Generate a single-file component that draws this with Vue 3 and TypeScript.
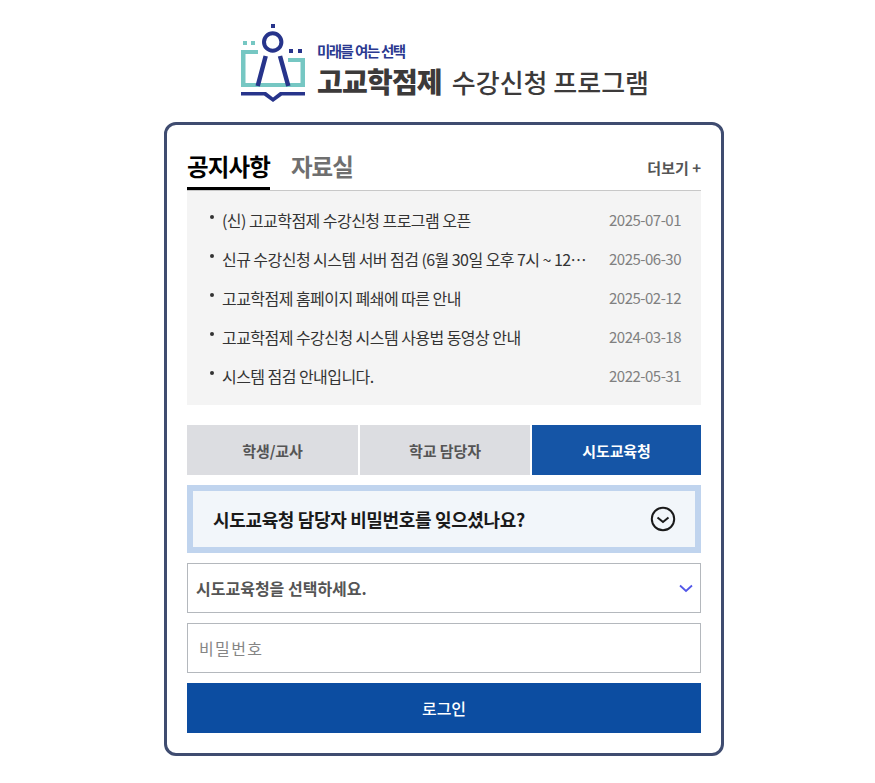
<script setup lang="ts">
interface Notice { title: string; date: string }
const notices: Notice[] = [
  { title: '(신) 고교학점제 수강신청 프로그램 오픈', date: '2025-07-01' },
  { title: '신규 수강신청 시스템 서버 점검 (6월 30일 오후 7시 ~ 12시 예정)', date: '2025-06-30' },
  { title: '고교학점제 홈페이지 폐쇄에 따른 안내', date: '2025-02-12' },
  { title: '고교학점제 수강신청 시스템 사용법 동영상 안내', date: '2024-03-18' },
  { title: '시스템 점검 안내입니다.', date: '2022-05-31' },
]
const roles = ['학생/교사', '학교 담당자', '시도교육청']
</script>

<template>
  <div class="page">
    <header class="logo">
      <svg class="mark" width="66" height="82" viewBox="0 0 66 82" fill="none">
        <g fill="#76c7c3">
          <rect x="3" y="19" width="4" height="4" />
          <rect x="11" y="19" width="4" height="4" />
          <path d="M1 28h17v4H5.500v29h55V40H48v-4h17v29H1z" />
        </g>
        <g fill="#27348b">
          <rect x="31" y="2" width="4" height="4" />
          <rect x="49" y="27" width="4" height="4" />
          <rect x="58" y="27" width="4" height="4" />
          <path d="M1 70h25l7 5.500 7-5.500h25v3.500H42l-9 6.500-9-6.500H1z" />
        </g>
        <circle cx="32.700" cy="20" r="8.700" stroke="#27348b" stroke-width="4" />
        <path d="M25.700 34 17.700 64M40 34l8.300 30" stroke="#27348b" stroke-width="4.500" />
      </svg>
      <div class="logo-text">
        <div class="slogan">미래를 여는 선택</div>
        <div class="brand"><b>고교학점제</b><span>수강신청 프로그램</span></div>
      </div>
    </header>

    <main class="card">
      <div class="tabs">
        <div class="tab active">공지사항</div>
        <div class="tab">자료실</div>
        <div class="more">더보기 +</div>
      </div>

      <ul class="notices">
        <li v-for="n in notices" :key="n.date" class="notice">
          <span class="bullet"></span>
          <span class="title">{{ n.title }}</span>
          <span class="date">{{ n.date }}</span>
        </li>
      </ul>

      <div class="roles">
        <button v-for="(r, i) in roles" :key="r" class="role" :class="{ on: i === 2 }">{{ r }}</button>
      </div>

      <div class="forgot">
        <span>시도교육청 담당자 비밀번호를 잊으셨나요?</span>
        <svg width="26" height="26" viewBox="0 0 26 26" fill="none" stroke="#1a1a1a">
          <circle cx="13" cy="13" r="11.2" stroke-width="2" />
          <path d="M7.500 11.500 13 16l5.500-4.500" stroke-width="2" />
        </svg>
      </div>

      <div class="field select">
        <span>시도교육청을 선택하세요.</span>
        <svg width="14" height="9" viewBox="0 0 14 9" fill="none" stroke="#5257e8" stroke-width="1.800">
          <path d="M1 1.500 7 7l6-5.500" />
        </svg>
      </div>
      <div class="field password">비밀번호</div>
      <button class="login">로그인</button>
    </main>
  </div>
</template>

<style>
body { background: #fff; }
</style>

<style scoped>
.page {
  width: 875px;
  height: 783px;
  box-sizing: border-box;
  padding: 22px 0 0 164px;
  font-family: "Noto Sans CJK KR", "Noto Sans", sans-serif;
  display: flex;
  flex-direction: column;
  align-items: flex-start;
  overflow: hidden;
}
.logo {
  height: 100px;
  width: 560px;
  box-sizing: border-box;
  padding-left: 76px;
  display: flex;
  align-items: flex-start;
  gap: 11px;
}
.mark { flex: none; }
.logo-text { padding-top: 19px; }
.slogan {
  font-size: 14.500px;
  line-height: 20px;
  font-weight: 700;
  color: #2b3990;
  letter-spacing: -1.6px;
  word-spacing: 1px;
}
.brand {
  display: flex;
  align-items: center;
  gap: 10px;
  height: 40px;
  white-space: nowrap;
  color: #3c3a3a;
}
.brand b { font-size: 28px; font-weight: 900; letter-spacing: -0.8px; }
.brand span { font-size: 26px; font-weight: 500; letter-spacing: 0; }
.card {
  width: 560px;
  height: 634px;
  box-sizing: border-box;
  border: 3px solid #3f4c70;
  border-radius: 12px;
  padding: 20px 20px 0;
  background: #fff;
}
.tabs {
  height: 45px;
  display: flex;
  align-items: stretch;
  gap: 21px;
  border-bottom: 1px solid #c8c8c8;
}
.tab {
  font-size: 23.500px;
  font-weight: 700;
  color: #6f6f6f;
  line-height: 42px;
  height: 44px;
  box-sizing: border-box;
  letter-spacing: -0.9px;
}
.tab.active { color: #000; border-bottom: 3px solid #000; height: 45px; }
.more {
  margin-left: auto;
  font-size: 15px;
  font-weight: 700;
  color: #555;
  line-height: 46px;
  letter-spacing: 0;
}
.notices {
  list-style: none;
  margin: 0;
  padding: 9px 20px 10px 23px;
  height: 214px;
  box-sizing: border-box;
  background: #f4f4f4;
  display: flex;
  flex-direction: column;
}
.notice {
  flex: 1;
  display: flex;
  align-items: center;
  font-size: 16px;
  letter-spacing: -0.55px;
  color: #333;
  min-width: 0;
}
.bullet {
  width: 4px;
  height: 4px;
  border-radius: 50%;
  background: #333;
  flex: none;
  margin: -6px 8px 0 0;
}
.title {
  flex: 1;
  min-width: 0;
  white-space: nowrap;
  overflow: hidden;
  text-overflow: ellipsis;
}
.date {
  flex: none;
  margin-left: 18px;
  font-size: 15px;
  color: #808080;
  letter-spacing: -0.5px;
}
.roles {
  margin-top: 20px;
  display: grid;
  grid-template-columns: 171fr 170fr 169fr;
  gap: 2px;
}
.role {
  height: 50px;
  border: 0;
  padding: 0;
  background: #dcdde1;
  color: #555;
  font: 700 15px "Noto Sans CJK KR", sans-serif;
  letter-spacing: -0.1px;
}
.role.on { background: #1555a6; color: #fff; }
.forgot {
  margin-top: 10px;
  height: 68px;
  box-sizing: border-box;
  border: 6px solid #c0d4ee;
  background: #f2f6fa;
  display: flex;
  align-items: center;
  justify-content: space-between;
  padding: 0 19px 0 20px;
  font-size: 18px;
  font-weight: 700;
  color: #1a1a1a;
  letter-spacing: -0.35px;
}
.field {
  margin-top: 10px;
  height: 50px;
  box-sizing: border-box;
  border: 1px solid #b4b8bd;
  display: flex;
  align-items: center;
  justify-content: space-between;
}
.select {
  padding: 0 7px 0 8px;
  font-size: 16px;
  font-weight: 700;
  color: #555;
  letter-spacing: 0;
}
.password {
  padding-left: 11px;
  font-size: 16px;
  color: #858585;
  letter-spacing: 1.4px;
}
.login {
  display: block;
  width: 100%;
  margin-top: 10px;
  height: 50px;
  border: 0;
  background: #0c4da1;
  color: #fff;
  font: 500 16px "Noto Sans CJK KR", sans-serif;
}
</style>
